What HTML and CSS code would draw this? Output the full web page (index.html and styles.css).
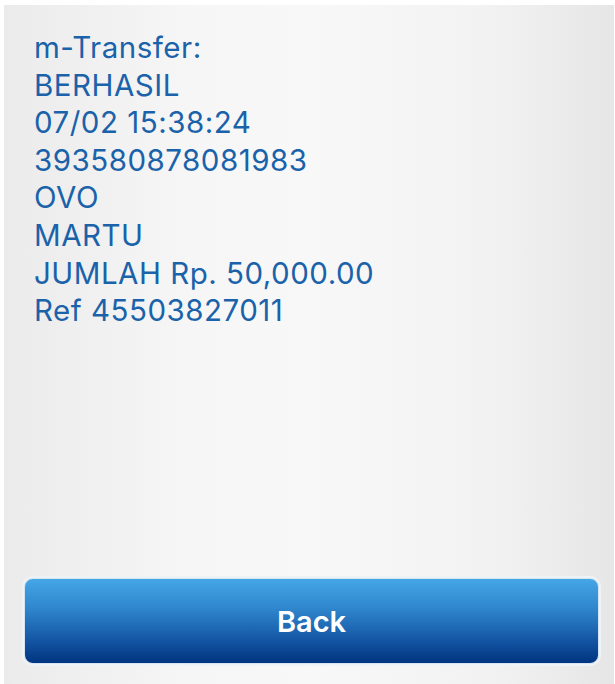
FILE: index.html
```html
<!DOCTYPE html>
<html>
<head>
<meta charset="utf-8">
<link rel="stylesheet" href="styles.css">
</head>
<body>
<div class="panel">
  <div class="message">
    <div class="line">m-Transfer:</div>
    <div class="line">BERHASIL</div>
    <div class="line">07/02 15:38:24</div>
    <div class="line">393580878081983</div>
    <div class="line">OVO</div>
    <div class="line">MARTU</div>
    <div class="line">JUMLAH Rp. 50,000.00</div>
    <div class="line">Ref 45503827011</div>
  </div>
  <div class="actions">
    <button class="back">Back</button>
  </div>
</div>
</body>
</html>
```
FILE: styles.css
```css
html, body {
  margin: 0;
  padding: 0;
  background: #ffffff;
}
body {
  width: 615px;
  height: 684px;
  overflow: hidden;
}
.panel {
  margin: 5px 1px 0 4px;
  height: 679px;
  box-sizing: border-box;
  display: flex;
  flex-direction: column;
  justify-content: space-between;
  padding: 24px 0 20px 0;
  background: linear-gradient(90deg, #ebebeb 0%, #f6f6f6 30%, #f8f8f8 50%, #f2f2f2 80%, #e6e6e6 100%);
}
.message {
  padding-left: 30px;
  font-family: Inter, "Liberation Sans", Arial, sans-serif;
  font-size: 29.5px;
  line-height: 37.6px;
  letter-spacing: 0.5px;
  color: #1a62aa;
}
.actions {
  padding: 0 15px 0 20px;
}
.back {
  display: block;
  width: 100%;
  height: 86px;
  border: 1px solid #d5e4ef;
  border-radius: 9px;
  background: linear-gradient(180deg, #45a6e6 0%, #2f86cc 35%, #1659a8 70%, #00347f 100%);
  color: #ffffff;
  font-family: Inter, "Liberation Sans", Arial, sans-serif;
  font-weight: 600;
  font-size: 29px;
  padding: 0;
  box-shadow: 0 0 0 2px #eef3f7;
}
```
